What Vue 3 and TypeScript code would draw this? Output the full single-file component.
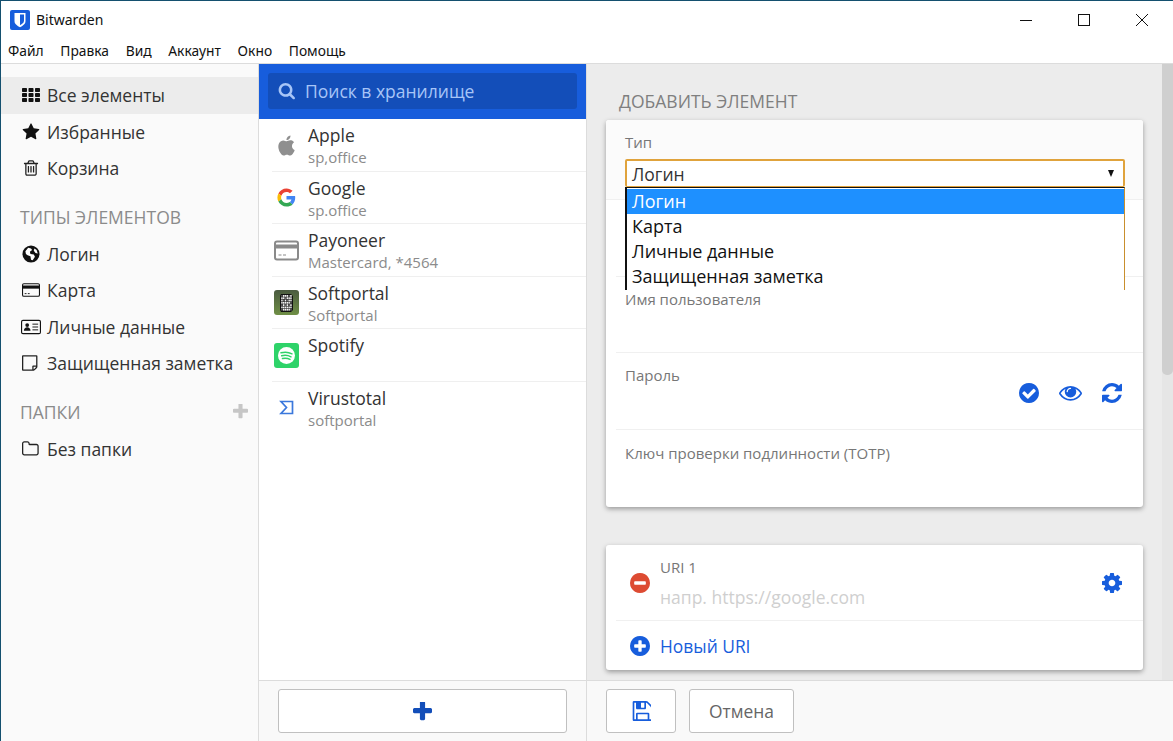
<script setup lang="ts">
const fa: Record<string, string> = {
  star: 'M1728 647q0 22-26 48l-363 354 86 500q1 7 1 20 0 21-10.5 35.5t-30.5 14.5q-19 0-40-12l-449-236-449 236q-22 12-40 12-21 0-31.5-14.5t-10.5-35.5q0-6 2-20l86-500-364-354q-25-27-25-48 0-37 56-46l502-73 225-455q19-41 49-41t49 41l225 455 502 73q56 9 56 46z',
  trash: 'M704 736v576q0 14-9 23t-23 9h-64q-14 0-23-9t-9-23v-576q0-14 9-23t23-9h64q14 0 23 9t9 23zm256 0v576q0 14-9 23t-23 9h-64q-14 0-23-9t-9-23v-576q0-14 9-23t23-9h64q14 0 23 9t9 23zm256 0v576q0 14-9 23t-23 9h-64q-14 0-23-9t-9-23v-576q0-14 9-23t23-9h64q14 0 23 9t9 23zm128 724v-948h-896v948q0 22 7 40.5t14.5 27 10.5 8.5h832q3 0 10.5-8.5t14.5-27 7-40.5zm-672-1076h448l-48-117q-7-9-17-11h-317q-10 2-17 11zm928 32v64q0 14-9 23t-23 9h-96v948q0 83-47 143.5t-113 60.5h-832q-66 0-113-58.5t-47-141.5v-952h-96q-14 0-23-9t-9-23v-64q0-14 9-23t23-9h309l70-167q15-37 54-63t79-26h320q40 0 79 26t54 63l70 167h309q14 0 23 9t9 23z',
  folder: 'M1536 1312v-704q0-40-28-68t-68-28h-704q-40 0-68-28t-28-68v-64q0-40-28-68t-68-28h-320q-40 0-68 28t-28 68v960q0 40 28 68t68 28h1216q40 0 68-28t28-68zm128-704v704q0 92-66 158t-158 66h-1216q-92 0-158-66t-66-158v-960q0-92 66-158t158-66h320q92 0 158 66t66 158v32h672q92 0 158 66t66 158z',
  note: 'M1400 1280h-248v248q29-10 41-22l185-185q12-12 22-41zm-280-128h288v-896h-1280v1280h896v-288q0-40 28-68t68-28zm416-928v1024q0 40-20 88t-48 76l-184 184q-28 28-76 48t-88 20h-1024q-40 0-68-28t-28-68v-1344q0-40 28-68t68-28h1344q40 0 68 28t28 68z',
  search: 'M1216 832q0-185-131.5-316.5t-316.5-131.5-316.5 131.5-131.5 316.5 131.5 316.5 316.5 131.5 316.5-131.5 131.5-316.5zm512 832q0 52-38 90t-90 38q-54 0-90-38l-343-342q-179 124-399 124-143 0-273.5-55.5t-225-150-150-225-55.5-273.5 55.5-273.5 150-225 225-150 273.5-55.5 273.5 55.5 225 150 150 225 55.5 273.5q0 220-124 399l343 343q37 37 37 90z',
  plus: 'M1600 736v192q0 40-28 68t-68 28h-416v416q0 40-28 68t-68 28h-192q-40 0-68-28t-28-68v-416h-416q-40 0-68-28t-28-68v-192q0-40 28-68t68-28h416v-416q0-40 28-68t68-28h192q40 0 68 28t28 68v416h416q40 0 68 28t28 68z',
  check: 'M1412 734q0-28-18-46l-91-90q-19-19-45-19t-45 19l-408 407-226-226q-19-19-45-19t-45 19l-91 90q-18 18-18 46 0 27 18 45l362 362q19 19 45 19 27 0 46-19l543-543q18-18 18-45zm252 162q0 209-103 385.5t-279.5 279.5-385.5 103-385.5-103-279.5-279.5-103-385.5 103-385.5 279.5-279.5 385.5-103 385.5 103 279.5 279.5 103 385.5z',
  eye: 'M1664 960q-152-236-381-353 61 104 61 225 0 185-131.5 316.5t-316.5 131.5-316.5-131.5-131.5-316.5q0-121 61-225-229 117-381 353 133 205 333.5 326.5t434.5 121.5 434.5-121.5 333.5-326.5zm-720-384q0-20-14-34t-34-14q-125 0-214.5 89.5t-89.5 214.5q0 20 14 34t34 14 34-14 14-34q0-86 61-147t147-61q20 0 34-14t14-34zm848 384q0 34-20 69-140 230-376.5 368.5t-499.5 138.5-499.5-139-376.5-368q-20-35-20-69t20-69q140-229 376.5-368t499.5-139 499.5 139 376.5 368q20 35 20 69z',
  refresh: 'M1639 1056q0 5-1 7-64 268-268 434.5t-478 166.5q-146 0-282.5-55t-243.5-157l-129 129q-19 19-45 19t-45-19-19-45v-448q0-26 19-45t45-19h448q26 0 45 19t19 45-19 45l-137 137q71 66 161 102t187 36q134 0 250-65t186-179q11-17 53-117 8-23 30-23h192q13 0 22.5 9.5t9.5 22.5zm25-800v448q0 26-19 45t-45 19h-448q-26 0-45-19t-19-45 19-45l138-138q-148-137-349-137-134 0-250 65t-186 179q-11 17-53 117-8 23-30 23h-199q-13 0-22.5-9.5t-9.5-22.5v-7q65-268 270-434.5t480-166.5q146 0 284 55.5t245 156.5l130-129q19-19 45-19t45 19 19 45z',
  minus: 'M1344 960v-128q0-26-19-45t-45-19h-768q-26 0-45 19t-19 45v128q0 26 19 45t45 19h768q26 0 45-19t19-45zm320-64q0 209-103 385.5t-279.5 279.5-385.5 103-385.5-103-279.5-279.5-103-385.5 103-385.5 279.5-279.5 385.5-103 385.5 103 279.5 279.5 103 385.5z',
  plusCircle: 'M1344 960v-128q0-26-19-45t-45-19h-256v-256q0-26-19-45t-45-19h-128q-26 0-45 19t-19 45v256h-256q-26 0-45 19t-19 45v128q0 26 19 45t45 19h256v256q0 26 19 45t45 19h128q26 0 45-19t19-45v-256h256q26 0 45-19t19-45zm320-64q0 209-103 385.5t-279.5 279.5-385.5 103-385.5-103-279.5-279.5-103-385.5 103-385.5 279.5-279.5 385.5-103 385.5 103 279.5 279.5 103 385.5z',
  cog: 'M1152 896q0-106-75-181t-181-75-181 75-75 181 75 181 181 75 181-75 75-181zm512-109v222q0 12-8 23t-20 13l-185 28q-19 54-39 91 35 50 107 138 10 12 10 25t-9 23q-27 37-99 108t-94 71q-12 0-26-9l-138-108q-44 23-91 38-16 136-29 186-7 28-36 28h-222q-14 0-24.5-8.5t-11.5-21.5l-28-184q-49-16-90-37l-141 107q-10 9-25 9-14 0-25-11-126-114-165-168-7-10-7-23 0-12 8-23 15-21 51-66.5t54-70.5q-27-50-41-99l-183-27q-13-2-21-12.5t-8-23.5v-222q0-12 8-23t19-13l186-28q14-46 39-92-40-57-107-138-10-12-10-24 0-10 9-23 26-36 98.5-107.5t94.5-71.5q13 0 26 10l138 107q44-23 91-38 16-136 29-186 7-28 36-28h222q14 0 24.5 8.5t11.5 21.5l28 184q49 16 90 37l142-107q9-9 24-9 13 0 25 10 129 119 165 170 7 8 7 22 0 12-8 23-15 21-51 66.5t-54 70.5q26 50 41 98l183 28q13 2 21 12.5t8 23.5z',
  save: 'M512 1536h768v-384h-768v384zm896 0h128v-896q0-14-10-38.5t-20-34.5l-281-281q-10-10-34-20t-39-10v416q0 40-28 68t-68 28h-576q-40 0-68-28t-28-68v-416h-128v1280h128v-416q0-40 28-68t68-28h832q40 0 68 28t28 68v416zm-384-928v-320q0-13-9.5-22.5t-22.5-9.5h-192q-13 0-22.5 9.5t-9.5 22.5v320q0 13 9.5 22.5t22.5 9.5h192q13 0 22.5-9.5t9.5-22.5zm640 32v928q0 40-28 68t-68 28h-1344q-40 0-68-28t-28-68v-1344q0-40 28-68t68-28h928q40 0 88 20t76 48l280 280q28 28 48 76t20 88z',
}
const menu = ['Файл', 'Правка', 'Вид', 'Аккаунт', 'Окно', 'Помощь']
const options = ['Логин', 'Карта', 'Личные данные', 'Защищенная заметка']
const softCells = [
  [0, 1, 1, 1, 0, 1],
  [1, 1, 0, 1, 1, 1],
  [1, 0, 1, 0, 1, 1],
  [1, 1, 1, 1, 1, 0],
  [0, 1, 0, 1, 0, 1],
  [1, 1, 1, 1, 1, 1],
  [0, 1, 1, 1, 1, 0],
]
</script>

<template>
  <div class="win">
    <header class="titlebar">
      <svg class="logo" viewBox="0 0 20 20">
        <rect width="20" height="20" rx="2" fill="#175ddc" />
        <path d="M4.500 3h11v8c0 3.200-3 5-5.500 6.200C7.500 16 4.500 14.200 4.500 11z" fill="#fff" />
        <path d="M10 4.500h4v6.300c0 2.100-2 3.400-4 4.400z" fill="#175ddc" />
      </svg>
      <span class="apptitle">Bitwarden</span>
      <div class="winctl">
        <svg viewBox="0 0 12 12" class="ctl"><path d="M0 6.500h12" stroke="#111" stroke-width="1" /></svg>
        <svg viewBox="0 0 12 12" class="ctl"><rect x=".5" y=".5" width="11" height="11" fill="none" stroke="#111" /></svg>
        <svg viewBox="0 0 12 12" class="ctl"><path d="M0 0l12 12M12 0L0 12" stroke="#111" stroke-width="1" /></svg>
      </div>
    </header>
    <nav class="menubar"><span v-for="m in menu" :key="m">{{ m }}</span></nav>

    <main class="main">
      <aside class="side">
        <a class="nav active">
          <svg class="ni" viewBox="0 0 18 16"><g fill="#111"><rect x="0" y="1" width="5" height="4" rx=".7" /><rect x="6.500" y="1" width="5" height="4" rx=".7" /><rect x="13" y="1" width="5" height="4" rx=".7" /><rect x="0" y="6" width="5" height="4" rx=".7" /><rect x="6.500" y="6" width="5" height="4" rx=".7" /><rect x="13" y="6" width="5" height="4" rx=".7" /><rect x="0" y="11" width="5" height="4" rx=".7" /><rect x="6.500" y="11" width="5" height="4" rx=".7" /><rect x="13" y="11" width="5" height="4" rx=".7" /></g></svg>
          Все элементы
        </a>
        <a class="nav"><svg class="ni" viewBox="0 0 1792 1792"><path :d="fa.star" fill="#111" /></svg>Избранные</a>
        <a class="nav"><svg class="ni" viewBox="0 0 1792 1792"><path :d="fa.trash" fill="#222" /></svg>Корзина</a>

        <div class="head first">ТИПЫ ЭЛЕМЕНТОВ</div>
        <a class="nav">
          <svg class="ni" viewBox="0 0 16 16"><circle cx="8" cy="8" r="7.600" fill="#111" /><path d="M3 5.500l2.500-3 2.500.5 1 1.500-2 1.500.5 2 3 .5 1 2-2 3-1.500-.5-.5-3-2.500-1-1.500-1z" fill="#fff" /><path d="M11 3l2 1.500 1 3-2-.5-1.500-2z" fill="#fff" /></svg>
          Логин
        </a>
        <a class="nav">
          <svg class="ni" viewBox="0 0 20 16"><rect x=".6" y="1" width="18.800" height="14" rx="1.500" fill="none" stroke="#111" stroke-width="1.200" /><rect x="1" y="3" width="18" height="3.500" fill="#111" /><path d="M3 12h2M6.500 12h2" stroke="#111" /></svg>
          Карта
        </a>
        <a class="nav">
          <svg class="ni idn" viewBox="0 0 21 16"><rect x=".6" y="1" width="19.800" height="14" rx="1.500" fill="none" stroke="#111" stroke-width="1.200" /><circle cx="6.500" cy="6" r="2" fill="#111" /><path d="M3 12c0-5 7-5 7 0z" fill="#111" /><path d="M12 5h6M12 8h6M12 11h6" stroke="#111" /></svg>
          Личные данные
        </a>
        <a class="nav"><svg class="ni" viewBox="0 0 1792 1792"><path :d="fa.note" fill="#222" /></svg>Защищенная заметка</a>

        <div class="head second">
          ПАПКИ
          <svg class="addf" viewBox="192 192 1408 1408"><path :d="fa.plus" fill="#c6c6c6" /></svg>
        </div>
        <a class="nav"><svg class="ni" viewBox="0 0 1792 1792"><path :d="fa.folder" fill="#222" /></svg>Без папки</a>
      </aside>

      <section class="list">
        <div class="searchbar">
          <div class="search">
            <svg viewBox="0 128 1728 1728" class="si"><path :d="fa.search" fill="#a7c5f7" /></svg>
            <span>Поиск в хранилище</span>
          </div>
        </div>
        <div class="rows">
          <div class="row">
            <svg class="ri" viewBox="-3 -2 30 28"><path fill="#8f8f8f" d="M12.152 6.896c-.948 0-2.415-1.078-3.96-1.04-2.04.027-3.91 1.183-4.961 3.014-2.117 3.675-.546 9.103 1.519 12.09 1.013 1.454 2.208 3.09 3.792 3.039 1.52-.065 2.09-.987 3.935-.987 1.831 0 2.35.987 3.96.948 1.637-.026 2.676-1.48 3.676-2.948 1.156-1.688 1.636-3.325 1.662-3.415-.039-.013-3.182-1.221-3.22-4.857-.026-3.04 2.48-4.494 2.597-4.559-1.429-2.09-3.623-2.324-4.39-2.376-2-.156-3.675 1.09-4.61 1.09zM15.530 3.830c.843-1.012 1.400-2.427 1.245-3.830-1.207.052-2.662.805-3.532 1.818-.78.896-1.454 2.338-1.273 3.714 1.338.104 2.715-.688 3.559-1.701" /></svg>
            <div class="rt"><div class="name">Apple</div><div class="sub">sp,office</div></div>
          </div>
          <div class="row">
            <svg class="ri" viewBox="-9 -9 66 66">
              <path fill="#EA4335" d="M24 9.500c3.540 0 6.710 1.220 9.210 3.600l6.850-6.850C35.900 2.380 30.470 0 24 0 14.620 0 6.510 5.380 2.560 13.220l7.980 6.190C12.430 13.720 17.740 9.500 24 9.500z" />
              <path fill="#4285F4" d="M46.980 24.550c0-1.570-.15-3.090-.38-4.550H24v9.020h12.940c-.58 2.960-2.260 5.480-4.780 7.180l7.730 6c4.510-4.180 7.090-10.360 7.090-17.650z" />
              <path fill="#FBBC05" d="M10.530 28.590c-.48-1.450-.76-2.990-.76-4.590s.27-3.140.76-4.590l-7.980-6.190C.92 16.460 0 20.120 0 24c0 3.880.92 7.540 2.560 10.780l7.970-6.190z" />
              <path fill="#34A853" d="M24 48c6.480 0 11.930-2.130 15.890-5.810l-7.730-6c-2.150 1.450-4.920 2.300-8.160 2.300-6.260 0-11.570-4.220-13.470-9.910l-7.980 6.190C6.510 42.620 14.620 48 24 48z" />
            </svg>
            <div class="rt"><div class="name">Google</div><div class="sub">sp.office</div></div>
          </div>
          <div class="row">
            <svg class="ri" viewBox="0 0 25 25"><rect x="1" y="3.500" width="23" height="18" rx="2" fill="none" stroke="#8a8a8a" stroke-width="2" /><rect x="1.500" y="6.500" width="22" height="4" fill="#8a8a8a" /><path d="M4.500 17h3M9 17h3" stroke="#8a8a8a" /></svg>
            <div class="rt"><div class="name">Payoneer</div><div class="sub">Mastercard, *4564</div></div>
          </div>
          <div class="row">
            <svg class="ri" viewBox="0 0 25 25">
              <defs><linearGradient id="sp" x1="0" y1="0" x2="0" y2="1"><stop offset="0" stop-color="#4a5a40" /><stop offset="1" stop-color="#6f8f45" /></linearGradient></defs>
              <rect width="25" height="25" rx="3" fill="url(#sp)" />
              <path d="M7 4h10l2 2v14l-2 2H7l-1-2V6z" fill="#111" />
              <g v-for="(line, y) in softCells" :key="y">
                <rect v-for="(c, x) in line" :key="x" :x="7.200 + x * 1.800" :y="5 + y * 2.300" width="1.500" height="1.800" :fill="c ? '#f2f2f2' : '#666'" />
              </g>
            </svg>
            <div class="rt"><div class="name">Softportal</div><div class="sub">Softportal</div></div>
          </div>
          <div class="row">
            <svg class="ri" viewBox="0 0 25 25"><rect width="25" height="25" rx="3" fill="#2ed369" /><circle cx="12.500" cy="12.500" r="8.500" fill="#fff" /><path d="M7 9.800c3.800-1 7.500-.8 11 1M7.700 12.800c3.200-.8 6.300-.6 9.300 1M8.500 15.600c2.500-.6 5-.4 7.500.8" fill="none" stroke="#2ed369" stroke-width="1.500" stroke-linecap="round" /></svg>
            <div class="rt"><div class="name">Spotify</div></div>
          </div>
          <div class="row bare">
            <svg class="ri" viewBox="0 0 25 25"><path d="M7 6.500h11.500v12H7l5.500-6z" fill="none" stroke="#3b78dc" stroke-width="1.700" /></svg>
            <div class="rt"><div class="name">Virustotal</div><div class="sub">softportal</div></div>
          </div>
        </div>
        <footer class="foot listfoot">
          <button class="btn addbtn"><svg viewBox="192 192 1408 1408" class="bi plusi"><path :d="fa.plus" fill="#134eb9" /></svg></button>
        </footer>
      </section>

      <section class="detail">
        <div class="scroller">
          <div class="pane">
            <h2 class="ptitle">ДОБАВИТЬ ЭЛЕМЕНТ</h2>
            <div class="card first-card">
              <div class="field focused">
                <label>Тип</label>
                <div class="selwrap">
                  <div class="select">Логин<span class="arrow"></span></div>
                  <ul class="dropdown">
                    <li v-for="(o, i) in options" :key="o" :class="{ sel: i === 0 }">{{ o }}</li>
                  </ul>
                </div>
              </div>
              <div class="field"></div>
              <div class="field"><label>Имя пользователя</label></div>
              <div class="field">
                <label>Пароль</label>
                <div class="tools">
                  <svg viewBox="128 128 1536 1536" class="ic"><path :d="fa.check" /></svg>
                  <svg viewBox="0 0 1792 1792" class="ic eye"><path :d="fa.eye" /></svg>
                  <svg viewBox="128 128 1536 1536" class="ic"><path :d="fa.refresh" /></svg>
                </div>
              </div>
              <div class="field last"><label>Ключ проверки подлинности (TOTP)</label></div>
            </div>
            <div class="card uri-card">
              <div class="uri">
                <svg viewBox="128 128 1536 1536" class="ic red"><path :d="fa.minus" /></svg>
                <div class="uritext">
                  <label>URI 1</label>
                  <div class="ph">напр. https://google.com</div>
                </div>
                <svg viewBox="128 128 1536 1536" class="ic"><path :d="fa.cog" /></svg>
              </div>
              <div class="newuri">
                <svg viewBox="128 128 1536 1536" class="ic"><path :d="fa.plusCircle" /></svg>
                <span>Новый URI</span>
              </div>
            </div>
          </div>
          <div class="scrollbar"><div class="thumb"></div></div>
        </div>
        <footer class="foot detfoot">
          <button class="btn savebtn"><svg viewBox="0 128 1536 1536" class="bi"><path :d="fa.save" fill="#175ddc" /></svg></button>
          <button class="btn cancel">Отмена</button>
        </footer>
      </section>
    </main>
  </div>
</template>

<style>
html, body { margin: 0; padding: 0; background: #fff; overflow: hidden; }
</style>

<style scoped>
.win {
  width: 1173px; height: 741px; box-sizing: border-box;
  border-top: 1px solid #14506f; border-left: 1px solid #14506f;
  display: flex; flex-direction: column; overflow: hidden;
  font-family: "Open Sans", sans-serif; color: #333; background: #fff;
}
.titlebar { height: 37px; display: flex; align-items: center; padding-left: 9px; flex: none; }
.logo { width: 20px; height: 20px; margin-right: 6px; }
.apptitle { font: 14px "Noto Sans", sans-serif; color: #111; }
.winctl { margin-left: auto; display: flex; align-items: center; gap: 46px; margin-right: 25px; }
.ctl { width: 12px; height: 12px; display: block; }
.menubar {
  flex: none; display: flex; gap: 16.7px; align-items: center; padding-left: 7px;
  font: 13.8px "Noto Sans", sans-serif; color: #111; border-bottom: 1px solid #dcdcdc; padding-bottom: 1px; height: 24px;
}
.main { flex: 1; display: flex; min-height: 0; }

.side { width: 257px; flex: none; background: #fafafa; border-right: 1px solid #dcdcdc; padding-top: 13px; font-size: 17.5px; }
.nav { display: flex; align-items: center; height: 36.5px; padding-left: 21px; color: #333; }
.nav.active { background: #ececec; }
.ni { width: 18px; height: 18px; margin-right: 7px; flex: none; }
.idn { width: 20px; margin-left: -1px; margin-right: 6px; }
.head { font-size: 17.5px; color: #8b8b8b; padding-left: 19px; display: flex; align-items: center; height: 24px; }
.head.first { margin-top: 18px; margin-bottom: 7px; }
.head.second { margin-top: 18px; margin-bottom: 7px; }
.addf { width: 15px; height: 15px; margin-left: auto; margin-right: 10px; }

.list { width: 327px; flex: none; border-right: 1px solid #dcdcdc; display: flex; flex-direction: column; background: #fff; }
.searchbar { height: 55px; flex: none; background: #175ddc; padding: 9px 9px 10px; box-sizing: border-box; }
.search { height: 36px; background: #134eb9; border-radius: 3px; display: flex; align-items: center; padding-left: 10px; color: #a7c5f7; font-size: 17.5px; }
.si { width: 17px; height: 17px; margin-right: 10px; }
.rows { flex: 1; min-height: 0; }
.row { height: 52.5px; box-sizing: border-box; display: flex; align-items: center; padding-left: 15px; position: relative; }
.row::after { content: ""; position: absolute; left: 13px; right: 0; bottom: 0; height: 1px; background: #efefef; }
.row.bare::after { display: none; }
.ri { width: 25px; height: 25px; flex: none; margin-right: 9px; }
.rt { align-self: flex-start; padding-top: 5px; }
.name { font-size: 17.5px; line-height: 23px; color: #333; }
.sub { font-size: 15px; line-height: 21px; color: #8b8b8b; }

.foot { height: 61px; flex: none; box-sizing: border-box; background: #f9f9f9; border-top: 1px solid #dcdcdc; }
.listfoot { padding: 8px 19px 0; }
.detfoot { padding: 8px 19px 0; display: flex; gap: 13px; }
.btn { height: 44px; background: #fff; border: 1px solid #c0c0c0; border-radius: 3px; font: 17.4px "Open Sans", sans-serif; color: #666; display: flex; align-items: center; justify-content: center; padding: 0; }
.addbtn { width: 289px; }
.savebtn { width: 70px; }
.cancel { width: 105px; }
.bi { width: 20px; height: 20px; }
.plusi { width: 19px; height: 19px; }

.detail { flex: 1; display: flex; flex-direction: column; min-width: 0; background: #ececec; }
.scroller { flex: 1; min-height: 0; display: flex; overflow: hidden; }
.pane { flex: 1; min-width: 0; padding: 0 19px; }
.scrollbar { width: 11px; flex: none; background: #e6e6e6; }
.thumb { height: 311px; background: #cfcfcf; border-radius: 0 0 5px 5px; }
.ptitle { margin: 0; height: 56px; line-height: 74px; font-size: 17.5px; font-weight: 400; color: #7f7f7f; padding-left: 13px; }
.card { background: #fff; border-radius: 3px; box-shadow: 0 2px 5px rgba(0,0,0,.35); }
.first-card { height: 387px; position: relative; }
.field { height: 76.6px; box-sizing: border-box; margin-left: 10px; padding-left: 9px; padding-top: 13px; border-bottom: 1px solid #f0f0f0; position: relative; }
.field.focused { height: 80px; margin-left: 0; padding-left: 19px; background: #fbfbfb; border-radius: 3px 3px 0 0; }
.field.last { border-bottom: 0; padding-top: 14px; }
label { display: block; font-size: 15px; line-height: 18px; color: #777; font-weight: 400; }
.selwrap { position: absolute; left: 19px; right: 18px; top: 39px; }
.select { height: 28px; box-sizing: border-box; border: 1px solid #e0a33c; border-width: 2px 2px 1px; border-radius: 2px; background: #fff; color: #333; font-size: 17.5px; line-height: 27px; padding-left: 5px; position: relative; }
.arrow { position: absolute; right: 9px; top: 9px; width: 0; height: 0; border-left: 3.5px solid transparent; border-right: 3.5px solid transparent; border-top: 7px solid #111; }
.dropdown { list-style: none; margin: 0; padding: 1px 0 0; position: absolute; left: 0; right: 0; top: 28px; height: 103px; box-sizing: border-box; overflow: hidden; background: #fff; border-left: 2px solid #111; border-right: 1px solid #c98f2d; border-top: 1px solid #111; z-index: 2; }
.dropdown li { height: 25px; line-height: 25px; font-size: 18px; color: #111; padding-left: 5px; }
.dropdown li.sel { background: #1e90ff; color: #fff; }
.tools { position: absolute; right: 21px; top: 28px; display: flex; align-items: center; gap: 20px; }
.ic { width: 20px; height: 20px; fill: #175ddc; flex: none; display: block; }
.ic.eye { width: 23px; height: 23px; }
.ic.red { fill: #dd4b32; }
.uri-card { margin-top: 38px; height: 125px; }
.uri { height: 76px; margin-left: 10px; box-sizing: border-box; border-bottom: 1px solid #f0f0f0; display: flex; align-items: center; padding: 0 21px 0 14px; }
.uritext { flex: 1; margin-left: 10px; padding-top: 2px; }
.ph { font-size: 17.5px; line-height: 24px; margin-top: 9px; color: #cfcfcf; }
.newuri { height: 49px; display: flex; align-items: center; padding-left: 24px; gap: 10px; color: #175ddc; font-size: 17.4px; }
</style>
